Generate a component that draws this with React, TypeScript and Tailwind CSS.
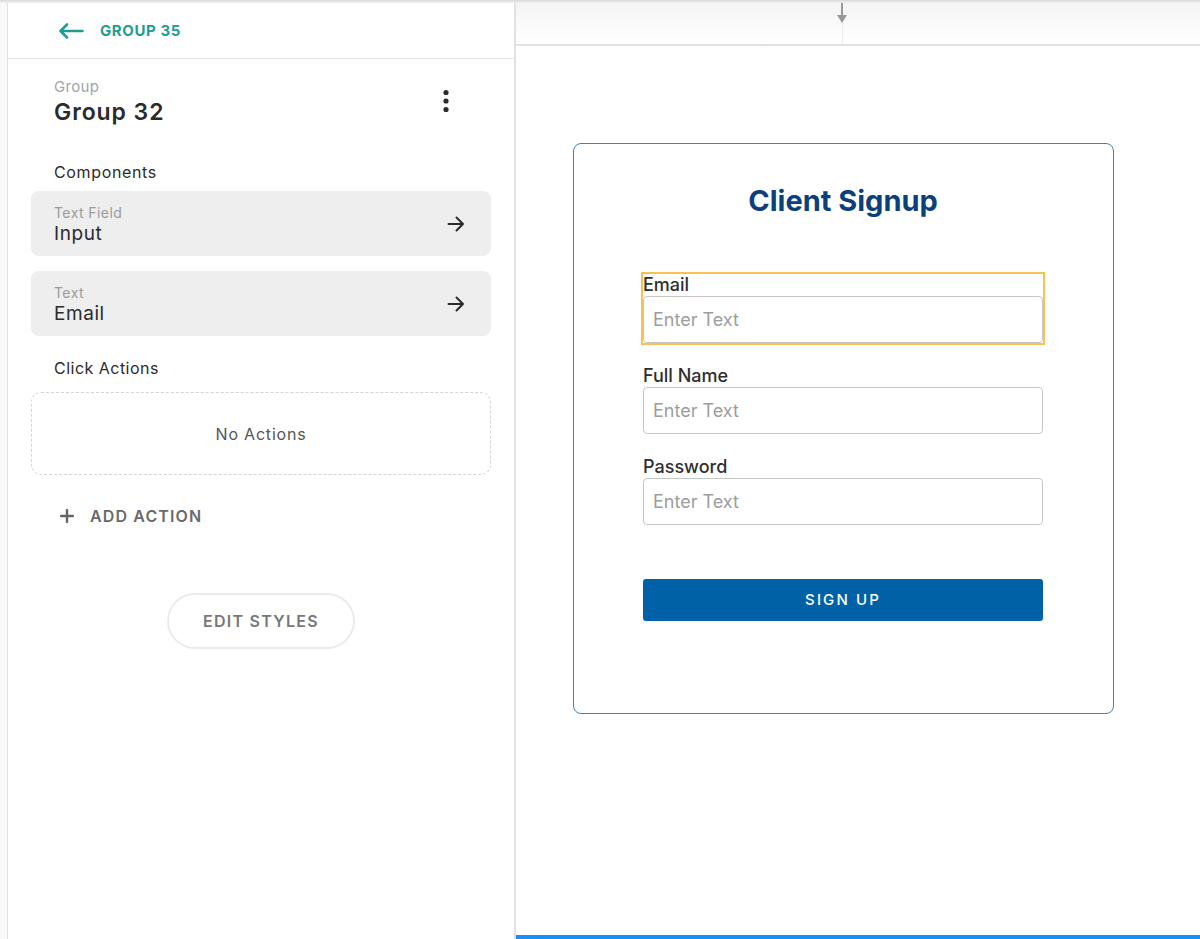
const LEFT_FONT = "font-['Inter','Open_Sans',sans-serif]";

const FIELDS = [
  { label: "Email", selected: true },
  { label: "Full Name", selected: false },
  { label: "Password", selected: false },
];

const COMPONENTS = [
  { kind: "Text Field", name: "Input" },
  { kind: "Text", name: "Email" },
];

export default function App() {
  return (
    <div className="flex h-[939px] w-[1200px] flex-col overflow-hidden bg-white">
      <div className="h-[3px] shrink-0 bg-gradient-to-b from-[#d9d9d9] to-[#f1f1f1]" />
      <div className="flex min-h-0 flex-1">
        <div className="w-[8px] shrink-0 border-r border-[#e3e3e3] bg-[#f9f9f9]" />
        <SidePanel />
        <Canvas />
      </div>
    </div>
  );
}

function SidePanel() {
  return (
    <aside className={`flex w-[508px] shrink-0 flex-col border-r-2 border-[#e2e2e2] ${LEFT_FONT}`}>
      <div className="flex h-[56px] shrink-0 items-center gap-[16px] border-b border-[#e6e6e6] pl-[50px] pt-[1px]">
        <svg width="26" height="16" viewBox="0 0 26 16" fill="none" stroke="#1f9d93" strokeWidth="2.6" strokeLinecap="round" strokeLinejoin="round">
          <path d="M24.5 8H2.5M9 1.5L2.5 8L9 14.5" />
        </svg>
        <span className="text-[15px] font-bold tracking-[0.04em] text-[#1f9d93]">GROUP 35</span>
      </div>

      <div className="px-[23px]">
        <div className="flex items-start justify-between pl-[23px] pr-[26px] pt-[19px]">
          <div>
            <p className="text-[15px] leading-[18px] tracking-[0.02em] text-[#a3a3a3]">Group</p>
            <p className="mt-[2px] text-[23px] font-semibold leading-[28px] tracking-[0.04em] text-[#2b2b2b]">Group 32</p>
          </div>
          <svg width="8" height="24" viewBox="0 0 8 24" className="mr-[15px] mt-[11px]" fill="#2b2b2b">
            <circle cx="4" cy="3.5" r="2.6" />
            <circle cx="4" cy="12" r="2.6" />
            <circle cx="4" cy="20.5" r="2.6" />
          </svg>
        </div>

        <p className="mt-[36px] pl-[23px] text-[16px] leading-[20px] tracking-[0.04em] text-[#2b2b2b]">Components</p>
        <div className="mt-[9px] flex flex-col gap-[15px]">
          {COMPONENTS.map((item) => (
            <div key={item.name} className="flex h-[65px] items-center justify-between rounded-[8px] bg-[#eeeeee] pl-[23px] pr-[26px]">
              <div className="pt-[2px]">
                <p className="text-[14px] leading-[18px] tracking-[0.03em] text-[#9b9b9b]">{item.kind}</p>
                <p className="text-[19px] leading-[24px] tracking-[0.03em] text-[#2b2b2b]">{item.name}</p>
              </div>
              <svg width="18" height="16" viewBox="0 0 18 16" fill="none" stroke="#2b2b2b" strokeWidth="2" strokeLinecap="round" strokeLinejoin="round">
                <path d="M1.5 8H16M9.5 1.5L16 8L9.5 14.5" />
              </svg>
            </div>
          ))}
        </div>

        <p className="mt-[22px] pl-[23px] text-[16px] leading-[20px] tracking-[0.03em] text-[#2b2b2b]">Click Actions</p>
        <div className="mt-[14px] flex h-[83px] items-center justify-center rounded-[10px] border border-dashed border-[#d4d4d4]">
          <span className="text-[16px] tracking-[0.05em] text-[#555555]">No Actions</span>
        </div>

        <button className="mt-[29px] flex items-center gap-[16px] pl-[29px]">
          <svg width="14" height="14" viewBox="0 0 14 14" fill="none" stroke="#666666" strokeWidth="2.4" strokeLinecap="round">
            <path d="M7 1V13M1 7H13" />
          </svg>
          <span className="text-[16px] font-semibold tracking-[0.07em] text-[#6a6a6a]">ADD ACTION</span>
        </button>

        <div className="mt-[65px] flex justify-center">
          <button className="h-[56px] w-[188px] rounded-full border-2 border-[#ebebeb] text-[16px] font-semibold tracking-[0.08em] text-[#777777]">
            EDIT STYLES
          </button>
        </div>
      </div>
    </aside>
  );
}

function Canvas() {
  return (
    <main className="flex min-w-0 flex-1 flex-col">
      <div className="flex h-[43px] shrink-0 border-b-2 border-[#e2e2e2] bg-gradient-to-b from-[#f4f4f4] to-white pl-[325px]">
        <div className="flex w-[2px] flex-col items-center">
          <div className="h-[12px] w-[2px] bg-[#999999]" />
          <svg width="10" height="8" viewBox="0 0 10 8" className="shrink-0">
            <path d="M0 0H10L5 8Z" fill="#999999" />
          </svg>
          <div className="w-px flex-1 bg-[#ececec]" />
        </div>
      </div>

      <div className="min-h-0 flex-1 font-['Inter','Liberation_Sans',sans-serif]">
        <div className="ml-[57px] mt-[97px] h-[571px] w-[541px] rounded-[8px] border border-[#2f86d0] pl-[69px]">
          <h1 className="mt-[40px] w-[400px] text-center text-[29px] font-bold leading-[34px] text-[#0d3f7c]">
            Client Signup
          </h1>
          <div className="mt-[56px] flex w-[400px] flex-col gap-[22px]">
            {FIELDS.map((field) => (
              <div key={field.label} className={field.selected ? "outline-2 outline-[#f7c24f]" : ""}>
                <p className="h-[22px] text-[18px] font-medium leading-[22px] text-[#2e2e2e]">{field.label}</p>
                <div className="flex h-[47px] items-center rounded-[4px] border border-[#c6c6c6] pl-[9px]">
                  <span className="text-[18px] text-[#9d9d9d]">Enter Text</span>
                </div>
              </div>
            ))}
          </div>
          <button className="mt-[54px] h-[42px] w-[400px] rounded-[3px] bg-[#0061a7] text-[15px] font-medium tracking-[0.14em] text-white">
            SIGN UP
          </button>
        </div>
      </div>

      <div className="h-[4px] shrink-0 bg-[#1790fb]" />
    </main>
  );
}
